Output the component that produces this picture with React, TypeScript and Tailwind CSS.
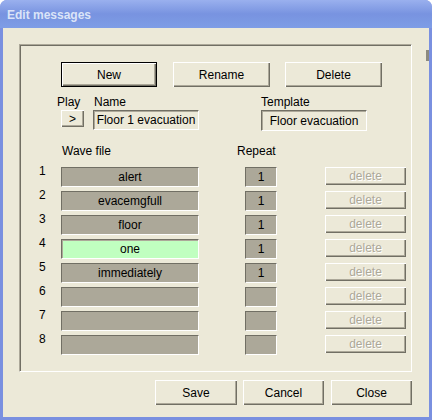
import React from 'react';

const raised =
  'bg-[#ece9d8] shadow-[inset_1px_1px_#ffffff,inset_-1px_-1px_#716f64,inset_-2px_-2px_#aca899]';
const sunken =
  'border border-t-[#716f64] border-l-[#716f64] border-r-white border-b-white shadow-[inset_1px_1px_#aca899]';

interface BtnProps {
  label: string;
  w: string;
  h?: string;
  isDefault?: boolean;
  disabled?: boolean;
  className?: string;
}

const Btn: React.FC<BtnProps> = ({ label, w, h = 'h-[25px]', isDefault, disabled, className }) => {
  const inner = (
    <div
      className={`flex h-full w-full items-center justify-center ${raised} ${
        disabled ? 'text-[#aca899] [text-shadow:1px_1px_0_#ffffff]' : 'text-black'
      }`}
    >
      {label}
    </div>
  );
  return (
    <div className={`${w} ${h} shrink-0 ${isDefault ? 'border border-black' : ''} ${className || ''}`}>
      {inner}
    </div>
  );
};

const rows = [
  { wave: 'alert', repeat: '1' },
  { wave: 'evacemgfull', repeat: '1' },
  { wave: 'floor', repeat: '1' },
  { wave: 'one', repeat: '1', active: true },
  { wave: 'immediately', repeat: '1' },
  { wave: '', repeat: '' },
  { wave: '', repeat: '' },
  { wave: '', repeat: '' },
];

export default function App() {
  return (
    <div className="flex h-[420px] w-[432px] flex-col overflow-hidden rounded-t-[7px] bg-[#7a90e0] font-['Liberation_Sans',Arial,sans-serif] text-[12px] leading-[14px] text-black">
      {/* title bar */}
      <div className="flex h-[28px] shrink-0 items-center bg-linear-to-b from-[#9ab0ee] via-[#7893e0] to-[#7e9de6] pl-[7px] pt-[2px]">
        <span className="text-[12px] font-bold text-[#dbe4f8]">Edit messages</span>
      </div>

      {/* body */}
      <div className="relative mx-[3px] mb-[3px] flex-1 bg-[#ece9d8] pl-[16px] pt-[16px]">
        <div className="absolute right-0 top-[22px] h-[11px] w-[3px] bg-[#8c8a80]" />

        {/* group box */}
        <div className="flex h-[328px] w-[393px] flex-col border border-t-[#aca899] border-l-[#aca899] border-r-white border-b-white shadow-[inset_1px_1px_#716f64]">
          {/* top buttons */}
          <div className="ml-[41px] mt-[17px] flex">
            <Btn label="New" w="w-[96px]" isDefault />
            <Btn label="Rename" w="w-[97px]" className="ml-[16px]" />
            <Btn label="Delete" w="w-[97px]" className="ml-[15px]" />
          </div>

          {/* labels */}
          <div className="ml-[37px] mt-[8px] flex h-[14px]">
            <span className="w-[37px]">Play</span>
            <span className="w-[167px]">Name</span>
            <span>Template</span>
          </div>

          {/* fields */}
          <div className="ml-[41px] mt-[1px] flex items-start">
            <Btn label=">" w="w-[23px]" h="h-[17px]" />
            <div className={`ml-[9px] flex h-[20px] w-[106px] items-center justify-center bg-[#ece9d8] ${sunken}`}>
              Floor 1 evacuation
            </div>
            <div className={`ml-[62px] flex h-[21px] w-[106px] items-center justify-center bg-[#ece9d8] ${sunken}`}>
              Floor evacuation
            </div>
          </div>

          {/* headers */}
          <div className="ml-[42px] mt-[13px] flex h-[14px]">
            <span className="w-[175px]">Wave file</span>
            <span>Repeat</span>
          </div>

          {/* rows */}
          <div className="mt-[9px] flex flex-col gap-[4px]">
            {rows.map((r, i) => (
              <div key={i} className="flex h-[20px] items-start">
                <span className="-mt-[3px] ml-[19px] w-[22px]">{i + 1}</span>
                <div
                  className={`flex h-[20px] w-[138px] items-center justify-center ${
                    r.active ? 'bg-[#c0ffc0]' : 'bg-[#aca899]'
                  } ${sunken}`}
                >
                  {r.wave}
                </div>
                <div className={`ml-[46px] flex h-[20px] w-[32px] items-center justify-center bg-[#aca899] ${sunken}`}>
                  {r.repeat}
                </div>
                <Btn label="delete" w="w-[81px]" h="h-[18px]" disabled className="ml-[48px]" />
              </div>
            ))}
          </div>
        </div>

        {/* bottom buttons */}
        <div className="mt-[8px] flex pl-[136px]">
          <Btn label="Save" w="w-[82px]" />
          <Btn label="Cancel" w="w-[81px]" className="ml-[6px]" />
          <Btn label="Close" w="w-[81px]" className="ml-[7px]" />
        </div>
      </div>
    </div>
  );
}
